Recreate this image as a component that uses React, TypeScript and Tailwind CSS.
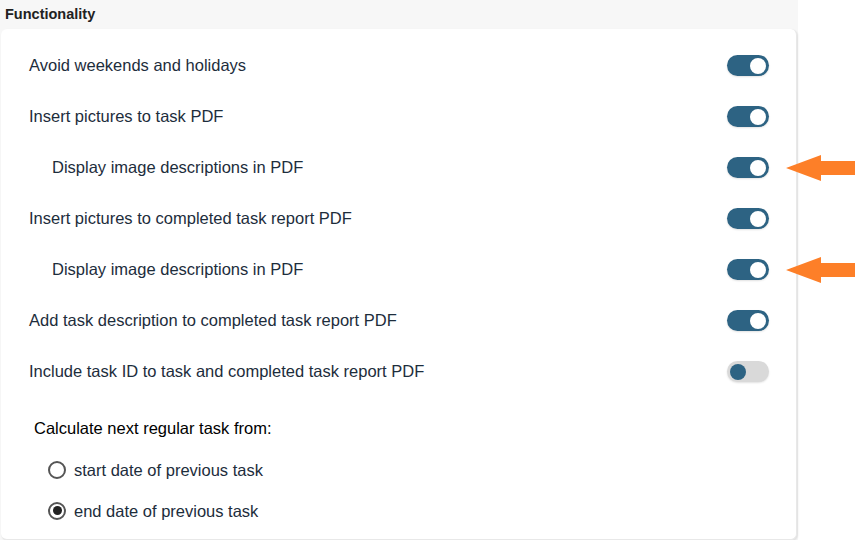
import React, { useState } from 'react';

type Row = { label: string; indent?: boolean; on: boolean; arrow?: boolean };

const rows: Row[] = [
  { label: 'Avoid weekends and holidays', on: true },
  { label: 'Insert pictures to task PDF', on: true },
  { label: 'Display image descriptions in PDF', indent: true, on: true, arrow: true },
  { label: 'Insert pictures to completed task report PDF', on: true },
  { label: 'Display image descriptions in PDF', indent: true, on: true, arrow: true },
  { label: 'Add task description to completed task report PDF', on: true },
  { label: 'Include task ID to task and completed task report PDF', on: false },
];

const Toggle: React.FC<{ on: boolean; onClick: () => void }> = ({ on, onClick }) => (
  <button
    onClick={onClick}
    className={`w-[42px] h-[21px] rounded-full flex items-center px-[3px] shadow-[0_1px_2px_rgba(0,0,0,0.12)] ${
      on ? 'bg-[#2d6383] justify-end' : 'bg-[#d9d9d9] justify-start'
    }`}
  >
    <span className={`w-[16px] h-[16px] rounded-full ${on ? 'bg-white' : 'bg-[#2d6383]'}`} />
  </button>
);

const Arrow = () => (
  <svg width="70" height="28" viewBox="0 0 70 28" className="absolute left-[785px] -translate-y-1/2 top-1/2">
    <path d="M0 14 L35 1 L35 7 L70 7 L70 21 L35 21 L35 27 Z" fill="#fd7f28" />
  </svg>
);

const App: React.FC = () => {
  const [state, setState] = useState(rows.map((r) => r.on));
  const [calc, setCalc] = useState<'start' | 'end'>('end');

  return (
    <div className="w-[855px] h-[540px] bg-white flex font-['Liberation_Sans',Arial,sans-serif] overflow-hidden">
      <div className="w-[798px] bg-[#f7f7f7] flex flex-col">
        <div className="h-[29px] flex items-center pl-[5px] text-[14.5px] font-bold text-[#222]">Functionality</div>
        <div className="ml-[1px] mr-[1px] flex-1 bg-white rounded-[6px] shadow-[1px_1px_2px_rgba(0,0,0,0.1)] border-r border-b border-[#e8e8e8] pt-[11px]">
          {rows.map((r, i) => (
            <div key={i} className="relative h-[51px] flex items-center justify-between pr-[27px]">
              <span className={`text-[16.5px] text-[#1d2d3c] ${r.indent ? 'pl-[51px]' : 'pl-[28px]'}`}>{r.label}</span>
              <Toggle on={state[i]} onClick={() => setState(state.map((s, j) => (j === i ? !s : s)))} />
              {r.arrow && <Arrow />}
            </div>
          ))}
          <div className="pl-[33px] pt-[19px] text-[16.5px] text-black">Calculate next regular task from:</div>
          <div className="pl-[47px] pt-[17px] flex flex-col gap-[16px] text-[16.5px] text-[#1d2d3c]">
            {(['start', 'end'] as const).map((k) => (
              <label key={k} className="flex items-center gap-[8px] cursor-pointer" onClick={() => setCalc(k)}>
                <span className="w-[18px] h-[18px] rounded-full border-2 border-[#555] bg-white flex items-center justify-center">
                  {calc === k && <span className="w-[9px] h-[9px] rounded-full bg-[#222]" />}
                </span>
                <span>{k === 'start' ? 'start date of previous task' : 'end date of previous task'}</span>
              </label>
            ))}
          </div>
        </div>
      </div>
    </div>
  );
};

export default App;
